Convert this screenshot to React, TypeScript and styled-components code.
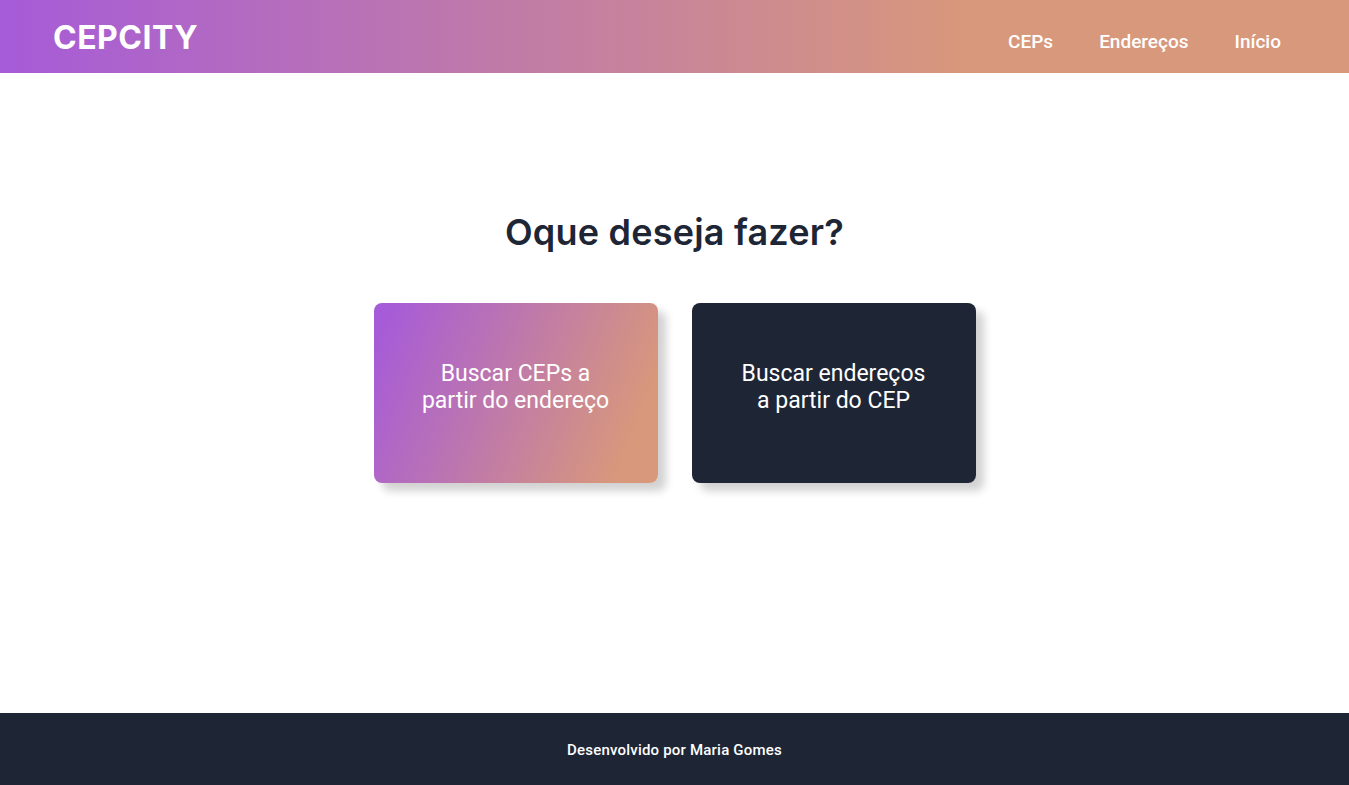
import React from 'react'
import styled, { createGlobalStyle } from 'styled-components'

const GlobalStyle = createGlobalStyle`
    * { box-sizing: border-box; }
    body {
        margin: 0;
        font-family: Roboto, "Liberation Sans", sans-serif;
        background: #fff;
    }
`

const purple = '#a65bd8'
const peach = '#d8987b'
const dark = '#1e2636'

const Page = styled.div`
    min-height: 785px;
    display: flex;
    flex-direction: column;
`

const Header = styled.header`
    height: 73px;
    display: flex;
    align-items: center;
    justify-content: space-between;
    padding: 0 68px 0 53px;
    background: linear-gradient(90deg, ${purple} 0%, ${peach} 72%);
`

const Logo = styled.h1`
    margin: 0;
    font-family: Inter, "Open Sans", sans-serif;
    font-size: 32px;
    font-weight: 700;
    color: #fff;
    letter-spacing: 0.5px;
    transform: translateY(1px);
`

const Nav = styled.nav`
    display: flex;
    gap: 46px;
    padding-top: 9px;
    a {
        color: #fff;
        text-decoration: none;
        font-size: 19px;
        font-weight: 500;
    }
`

const Main = styled.main`
    flex: 1;
    display: flex;
    flex-direction: column;
    align-items: center;
    padding-top: 135px;
`

const Title = styled.h2`
    margin: 0 0 47px;
    font-family: Inter, "Open Sans", sans-serif;
    font-size: 36px;
    font-weight: 600;
    color: ${dark};
    line-height: 48px;
    letter-spacing: 0.2px;
`

const Cards = styled.div`
    display: flex;
    gap: 34px;
`

const Card = styled.a<{ $gradient?: boolean }>`
    width: 284px;
    height: 180px;
    border-radius: 8px;
    display: flex;
    align-items: center;
    justify-content: center;
    text-align: center;
    color: #fff;
    text-decoration: none;
    font-size: 23px;
    line-height: 27px;
    padding: 0 30px 12px;
    background: ${p => p.$gradient
        ? `linear-gradient(112deg, ${purple} 4%, ${peach} 88%)`
        : dark};
    box-shadow: 8px 8px 8px rgba(0, 0, 0, 0.18);
`

const Footer = styled.footer`
    height: 72px;
    background: ${dark};
    display: flex;
    align-items: center;
    justify-content: center;
    color: #fff;
    font-size: 15px;
    font-weight: 500;
    letter-spacing: 0.2px;
    padding-top: 2px;
`

export default function App() {
    return (
        <Page>
            <GlobalStyle />
            <Header>
                <Logo>CEPCITY</Logo>
                <Nav>
                    <a href="#">CEPs</a>
                    <a href="#">Endereços</a>
                    <a href="#">Início</a>
                </Nav>
            </Header>
            <Main>
                <Title>Oque deseja fazer?</Title>
                <Cards>
                    <Card $gradient href="#">Buscar CEPs a<br />partir do endereço</Card>
                    <Card href="#">Buscar endereços<br />a partir do CEP</Card>
                </Cards>
            </Main>
            <Footer>Desenvolvido por Maria Gomes</Footer>
        </Page>
    )
}
